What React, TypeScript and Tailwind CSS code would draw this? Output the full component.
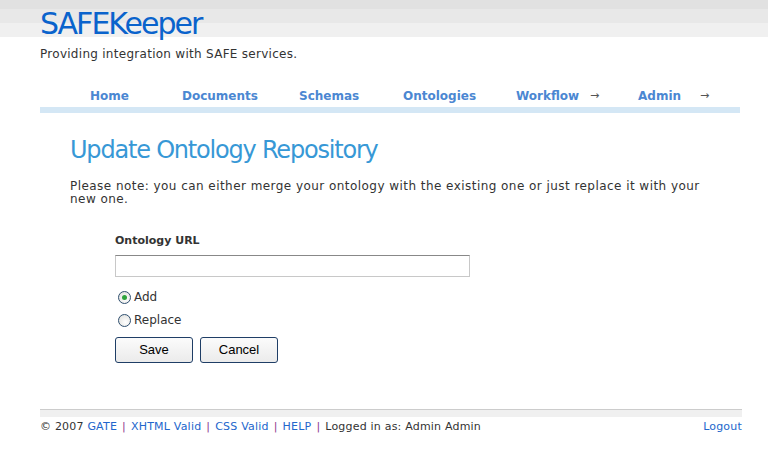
import React from "react";

const verdana = { fontFamily: '"DejaVu Sans", Verdana, sans-serif' };

const navItems = [
  { label: "Home", w: "w-[92px]" },
  { label: "Documents", w: "w-[117px]" },
  { label: "Schemas", w: "w-[104px]" },
  { label: "Ontologies", w: "w-[113px]" },
  { label: "Workflow", w: "w-[122px]", arrow: "left-[74px]" },
  { label: "Admin", w: "w-[102px]", arrow: "left-[62px]" },
];

function Sep() {
  return <span className="text-[#8e3a8e] px-[5px]">|</span>;
}

function Radio({ checked, label }: { checked?: boolean; label: string }) {
  return (
    <label className="flex h-[14px] items-center gap-[3px]">
      <span className="ml-[3px] flex h-[13px] w-[13px] items-center justify-center rounded-full border border-[#2f4f6f] bg-[radial-gradient(circle_at_60%_65%,#ffffff,#dcdcd8)]">
        {checked && <span className="h-[5px] w-[5px] rounded-full bg-[#2ea33c]" />}
      </span>
      {label}
    </label>
  );
}

export default function App() {
  return (
    <div className="min-h-[451px] w-[768px] bg-white text-[#333]" style={verdana}>
      {/* header */}
      <div className="relative h-[37px] bg-[linear-gradient(#e1e1e1_0,#e1e1e1_9px,#e8e8e8_9px,#e8e8e8_23px,#f0f0f0_23px,#f0f0f0_37px)]">
        <h1
          className="absolute left-[40px] top-[6px] text-[30px] leading-[36px] text-[#0a63cc] tracking-[-2px]"
          style={{ fontFamily: '"DejaVu Sans", Tahoma, sans-serif' }}
        >
          SAFEKeeper
        </h1>
      </div>
      <p className="ml-[40px] mt-[10px] text-[12px] leading-[15px] text-[#333] tracking-[0.28px]">
        Providing integration with SAFE services.
      </p>

      {/* nav */}
      <div className="ml-[40px] mt-[25px] w-[700px]">
        <ul className="flex pl-[50px] h-[18px] items-center">
          {navItems.map((n) => (
            <li key={n.label} className={`relative ${n.w} text-[12px] font-bold text-[#4b87d2] leading-[18px]`}>
              {n.label}
              {n.arrow && (
                <span className={`absolute top-0 ${n.arrow} text-[11px] font-normal text-[#555]`}>→</span>
              )}
            </li>
          ))}
        </ul>
        <div className="mt-[2px] h-[6px] bg-[#d4e7f5]" />
      </div>

      {/* main */}
      <div className="ml-[70px] mt-[22px]">
        <h2
          className="text-[24px] leading-[30px] text-[#3798d6] tracking-[-1.2px]"
          style={{ fontFamily: '"DejaVu Sans", Tahoma, sans-serif' }}
        >
          Update Ontology Repository
        </h2>
        <p className="mt-[15px] w-[660px] text-[12px] leading-[13px] text-[#333] tracking-[0.45px]">
          Please note: you can either merge your ontology with the existing one or just replace it with your new one.
        </p>

        <form className="ml-[45px] mt-[28px]">
          <label className="block text-[11px] font-bold leading-[14px] text-[#333]">Ontology URL</label>
          <input
            type="text"
            className="mt-[7px] block h-[22px] w-[355px] border border-[#c8c8c8] border-t-[#888] bg-white outline-none"
          />
          <div className="mt-[13px] flex flex-col gap-[9px] text-[12px] leading-[14px]">
            <Radio checked label="Add" />
            <Radio label="Replace" />
          </div>
          <div className="mt-[10px] flex gap-[7px]">
            {["Save", "Cancel"].map((b) => (
              <button
                key={b}
                type="button"
                className="h-[26px] w-[78px] rounded-[3px] border border-[#1f3e66] bg-[linear-gradient(#fbfbfb,#ebebeb)] text-[13px] text-black"
                style={{ fontFamily: '"Liberation Sans", Arial, sans-serif' }}
              >
                {b}
              </button>
            ))}
          </div>
        </form>
      </div>

      {/* footer */}
      <div className="ml-[40px] mt-[46px] w-[702px]">
        <div className="h-[8px] border-t border-[#cccccc] bg-[#f0f0f0]" />
        <div className="mt-[3px] flex justify-between text-[11px] leading-[14px] tracking-[0.2px]">
          <div>
            © 2007 <a className="text-[#2266cc]">GATE</a>
            <Sep />
            <a className="text-[#2266cc]">XHTML Valid</a>
            <Sep />
            <a className="text-[#2266cc]">CSS Valid</a>
            <Sep />
            <a className="text-[#2266cc]">HELP</a>
            <Sep />
            Logged in as: Admin Admin
          </div>
          <a className="text-[#2266cc]">Logout</a>
        </div>
      </div>
    </div>
  );
}
